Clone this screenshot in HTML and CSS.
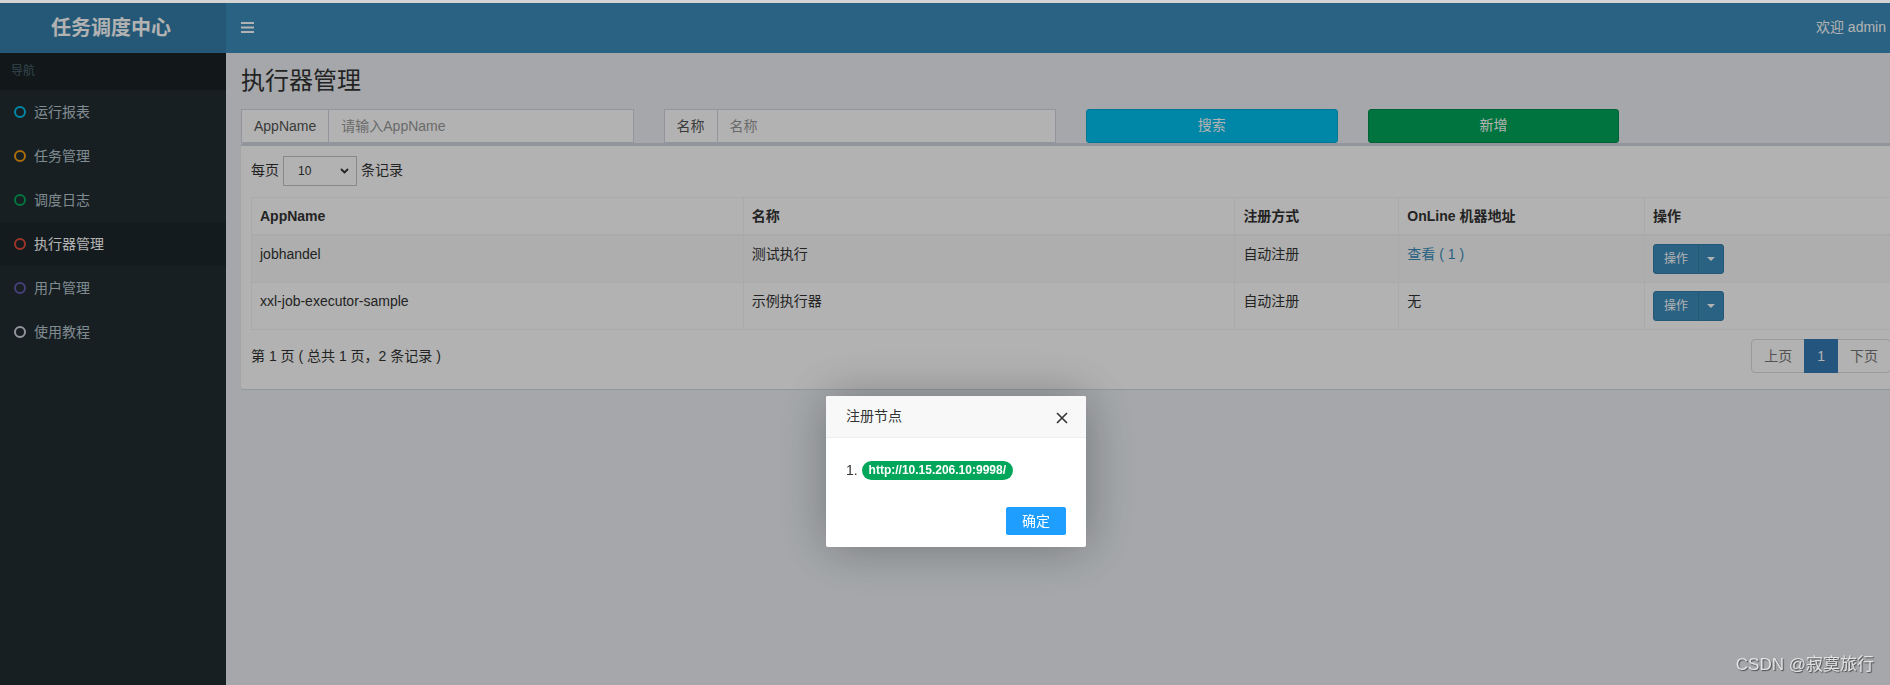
FILE: index.html
```html
<!DOCTYPE html>
<html lang="zh-CN">
<head>
<meta charset="utf-8">
<title>任务调度中心</title>
<link rel="stylesheet" href="styles.css">
</head>
<body>
<div class="topline"></div>
<div class="page">
  <header class="top">
    <div class="logo">任务调度中心</div>
    <nav class="navbar">
      <svg class="bars" width="13" height="11" viewBox="0 0 13 11"><rect x="0" y="0" width="13" height="2"/><rect x="0" y="4.5" width="13" height="2"/><rect x="0" y="9" width="13" height="2"/></svg>
      <span class="welcome">欢迎 admin</span>
    </nav>
  </header>
  <div class="body-row">
    <aside class="side">
      <div class="nav-head">导航</div>
      <ul class="menu">
        <li><a><span class="ring aqua"></span>运行报表</a></li>
        <li><a><span class="ring yellow"></span>任务管理</a></li>
        <li><a><span class="ring green"></span>调度日志</a></li>
        <li class="active"><a><span class="ring red"></span>执行器管理</a></li>
        <li><a><span class="ring purple"></span>用户管理</a></li>
        <li><a><span class="ring gray"></span>使用教程</a></li>
      </ul>
    </aside>
    <main class="content-wrap">
      <section class="content-header"><h1>执行器管理</h1></section>
      <section class="content">
        <div class="search">
          <div class="ig"><span class="addon">AppName</span><span class="input ph">请输入AppName</span></div>
          <div class="ig"><span class="addon">名称</span><span class="input ph">名称</span></div>
          <div class="btn btn-info">搜索</div>
          <div class="btn btn-success">新增</div>
        </div>
        <div class="box">
          <div class="length">
            <span>每页</span>
            <span class="sel"><span>10</span><svg width="9" height="6" viewBox="0 0 9 6"><polyline points="1,1 4.5,4.5 8,1" fill="none" stroke="#333" stroke-width="1.8"/></svg></span>
            <span>条记录</span>
          </div>
          <table class="tbl">
            <colgroup><col class="c30"><col class="c30"><col class="c10"><col class="c15"><col class="c15"></colgroup>
            <thead>
              <tr><th>AppName</th><th>名称</th><th>注册方式</th><th>OnLine 机器地址</th><th>操作</th></tr>
            </thead>
            <tbody>
              <tr><td>jobhandel</td><td>测试执行</td><td>自动注册</td><td><a class="link">查看 ( 1 )</a></td><td><span class="bgroup"><span class="bbtn">操作</span><span class="bbtn tog"><span class="caret"></span></span></span></td></tr>
              <tr><td>xxl-job-executor-sample</td><td>示例执行器</td><td>自动注册</td><td>无</td><td><span class="bgroup"><span class="bbtn">操作</span><span class="bbtn tog"><span class="caret"></span></span></span></td></tr>
            </tbody>
          </table>
          <div class="foot">
            <div class="info">第 1 页 ( 总共 1 页，2 条记录 )</div>
            <div class="pager"><span class="pg first">上页</span><span class="pg active">1</span><span class="pg last">下页</span></div>
          </div>
        </div>
      </section>
    </main>
  </div>
</div>
<div class="shade"></div>
<div class="layer">
  <div class="layer-title"><span>注册节点</span><svg class="close" width="12" height="12" viewBox="0 0 12 12"><path d="M1 1L11 11M11 1L1 11" stroke="#333" stroke-width="1.6" fill="none"/></svg></div>
  <div class="layer-content">1. <span class="badge">http://10.15.206.10:9998/</span></div>
  <div class="layer-btns"><span class="lbtn">确定</span></div>
</div>
<div class="watermark">CSDN @寂寞旅行</div>
</body>
</html>
```
FILE: styles.css
```css
* { box-sizing: border-box; }
html, body { margin: 0; height: 100%; overflow: hidden; }
body {
  font-family: "Liberation Sans", "Noto Sans CJK SC", Arial, sans-serif;
  font-size: 14px;
  line-height: 1.42857;
  color: #333;
  background: #ecf0f5;
}
.topline { height: 3px; background: #d4d4d4; }
.page { width: 100vw; overflow: hidden; }
.top { display: flex; height: 50px; }
.logo {
  width: 226px; flex: none; background: #367fa9; color: #fff;
  font-size: 20px; font-weight: bold; text-align: center; line-height: 50px;
  padding-right: 4px;
}
.navbar {
  flex: 1; background: #3c8dbc; color: #fff;
  display: flex; align-items: center; justify-content: space-between;
  padding: 0 4px 0 15px;
}
.bars { fill: #fff; display: block; margin-top: -1px; }
.welcome { font-size: 14px; }

.body-row { display: flex; min-height: calc(100vh - 53px); }
.side { width: 226px; flex: none; background: #222d32; }
.nav-head {
  background: #1a2226; color: #4b646f; font-size: 12px;
  padding: 10px 25px 10px 11px; line-height: 17px;
}
.menu { list-style: none; margin: 0; padding: 0; }
.menu a {
  display: flex; align-items: center; gap: 8px;
  padding: 12px 5px 12px 14px; color: #b8c7ce; line-height: 20px; font-size: 14px;
}
.menu li.active a { background: #1e282c; color: #fff; }
.ring { width: 12px; height: 12px; border: 2.3px solid; border-radius: 50%; flex: none; }
.aqua { border-color: #00c0ef; }
.yellow { border-color: #f39c12; }
.green { border-color: #00a65a; }
.red { border-color: #dd4b39; }
.purple { border-color: #605ca8; }
.gray { border-color: #d2d6de; }

.content-wrap { width: 1690px; flex: none; }
.content-header { padding: 15px 15px 0; }
.content-header h1 { margin: 0; font-size: 24px; font-weight: normal; line-height: 1.1; }
.content { padding: 15px; }
.search { display: grid; grid-template-columns: repeat(12, 1fr); column-gap: 30px; }
.ig { grid-column: span 3; display: flex; height: 34px; }
.addon {
  padding: 6px 12px; border: 1px solid #d2d6de; border-right: 0;
  background: #fff; color: #555; line-height: 20px; flex: none;
}
.input {
  flex: 1; border: 1px solid #d2d6de; background: #fff;
  padding: 6px 12px; line-height: 20px;
}
.ph { color: #999; }
.btn {
  grid-column: span 2; height: 34px; border: 1px solid; border-radius: 3px;
  color: #fff; display: flex; align-items: center; justify-content: center;
}
.btn-info { background: #00c0ef; border-color: #00acd6; }
.btn-success { background: #00a65a; border-color: #008d4c; }

.box {
  background: #fff; border-top: 3px solid #d2d6de; border-radius: 3px;
  box-shadow: 0 1px 1px rgba(0,0,0,.1); padding: 10px 10px 11px;
}
.length { display: flex; align-items: center; gap: 4px; height: 30px; }
.sel {
  width: 74px; height: 30px; border: 1px solid #c4c4c4; background: #fff;
  display: flex; align-items: center; justify-content: space-between;
  padding: 0 7px 0 14px; font-size: 12px;
}
.sel svg { display: block; }
.tbl {
  width: 100%; border-collapse: collapse; table-layout: fixed;
  margin-top: 11px; border: 1px solid #f4f4f4;
}
.c30 { width: 30%; }
.c10 { width: 10%; }
.c15 { width: 15%; }
.tbl th, .tbl td {
  border: 1px solid #f4f4f4; padding: 8px; text-align: left;
  vertical-align: top; line-height: 20px;
}
.tbl th { border-bottom-width: 2px; vertical-align: bottom; }
.tbl tbody tr:nth-child(odd) { background: #f9f9f9; }
.link { color: #3c8dbc; }
.bgroup { display: inline-flex; vertical-align: top; }
.bbtn {
  display: inline-flex; align-items: center; height: 30px;
  padding: 5px 10px; font-size: 12px; line-height: 18px; color: #fff;
  background: #3c8dbc; border: 1px solid #367fa9; border-radius: 3px 0 0 3px;
}
.bbtn.tog { padding: 5px 8px; margin-left: -1px; border-radius: 0 3px 3px 0; }
.caret {
  width: 0; height: 0; border-top: 4px solid #fff;
  border-left: 4px solid transparent; border-right: 4px solid transparent;
}
.foot { display: flex; justify-content: space-between; align-items: flex-start; margin-top: 9px; padding-bottom: 5px; }
.info { padding-top: 7px; line-height: 20px; }
.pager { display: flex; }
.pg {
  padding: 6px 12px; border: 1px solid #ddd; margin-left: -1px;
  line-height: 20px; color: #777; background: #fff;
}
.pg.first { margin-left: 0; border-radius: 4px 0 0 4px; }
.pg.last { border-radius: 0 4px 4px 0; }
.pg.active { background: #337ab7; border-color: #337ab7; color: #fff; position: relative; }

.shade { position: fixed; top: 3px; left: 0; right: 0; bottom: 0; background: rgba(0,0,0,.3); }
.layer {
  position: fixed; left: 826px; top: 396px; width: 260px;
  background: #fff; border-radius: 2px; box-shadow: 1px 1px 50px rgba(0,0,0,.3);
}
.layer-title {
  height: 42px; display: flex; align-items: center; justify-content: space-between;
  padding: 0 18px 0 20px; background: #f8f8f8; border-bottom: 1px solid #eee;
  color: #333; font-size: 14px; border-radius: 2px 2px 0 0;
}
.close { display: block; margin-top: 2px; }
.layer-content { padding: 20px; line-height: 24px; color: #333; font-size: 14px; }
.badge {
  display: inline-block; padding: 3px 7px 4px; font-size: 12px; font-weight: bold;
  line-height: 1; color: #fff; background: #00a65a; border-radius: 10px; vertical-align: 1px;
}
.layer-btns { padding: 0 20px 12px 15px; display: flex; justify-content: flex-end; }
.lbtn {
  margin-top: 5px; height: 28px; line-height: 26px; padding: 0 15px;
  background: #1e9fff; border: 1px solid #1e9fff; color: #fff; border-radius: 2px; font-size: 14px;
}
.watermark {
  position: fixed; right: 16px; bottom: 10px; font-size: 17px; line-height: 20px;
  color: #e2e2e2; text-shadow: 1px 1px 1px rgba(0,0,0,.55);
}
```
